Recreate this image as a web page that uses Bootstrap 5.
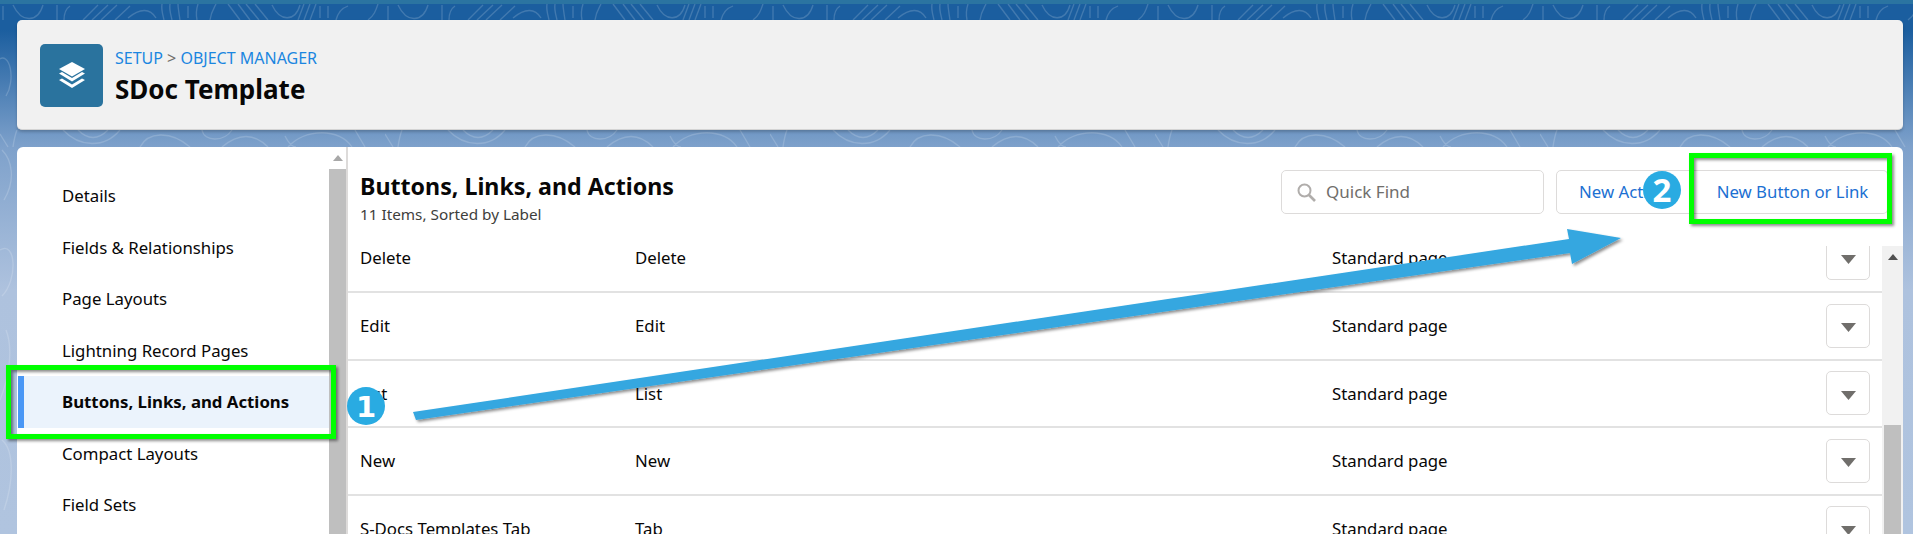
<!DOCTYPE html>
<html lang="en">
<head>
  <meta charset="UTF-8">
  <title>SDoc Template - Object Manager</title>
  <link href="https://cdn.jsdelivr.net/npm/bootstrap@5.3.0/dist/css/bootstrap.min.css" rel="stylesheet">
  <style>
    body {
      font-family: "Noto Sans", "Open Sans", sans-serif;
      font-size: 16.8px;
      color: #080707;
      overflow: hidden;
      background: linear-gradient(#1b5e9f 0, #1b5e9f 30px, #7ea1cb 147px, #aec2de 290px, #b0c4df 100%);
    }
    .topband { height: 4px; background: #2b74a1; position: relative; z-index: 1; }
    .contours { position: absolute; left: 0; top: 0; z-index: 0; }
    .shell { padding: 16px 10px 0 17px; position: relative; z-index: 1; height: 530px; }
    .head-panel { height: 110px; background: #f1f1f1; border-radius: 5px; padding: 2px 23px 0; box-shadow: 0 2px 3px rgba(0,0,0,.2); border-bottom: 1px solid #d4d4d4; }
    .obj-icon { width: 63px; height: 63px; background: #2a739e; border-radius: 5px; margin-right: 12px; }
    .crumbs { font-size: 16px; line-height: 20px; color: #706e6b; }
    .crumbs a { color: #1b86e0; text-decoration: none; }
    .obj-title { font-size: 26px; line-height: 36px; font-weight: 700; margin: 3px 0 -3px; color: #080707; }
    .main-panel { margin-top: 17px; background: #fff; min-height: 0; }
    .side-panel { width: 331px; border-right: 2px solid #dddbda; position: relative; overflow: hidden; }
    .side-nav { width: 311px; padding: 23px 0 0 1px; }
    .side-nav a { display: block; height: 51.5px; line-height: 51.5px; padding-left: 38px; color: #080707; text-decoration: none; border-left: 6px solid transparent; }
    .side-nav a.picked { background: #ebf3fc; border-left-color: #4a97f5; font-weight: 700; }
    .bar-track { width: 17px; background: #fff; }
    .bar-up { height: 22px; color: #a8a8a8; }
    .bar-thumb { background: #bfbfbf; flex: 1 1 auto; }
    .list-area { min-width: 0; }
    .list-head { height: 99px; padding: 23px 15px 0 12px; }
    .list-title { font-size: 23.2px; line-height: 32px; font-weight: 700; margin: 0; }
    .list-sub { font-size: 15.3px; line-height: 20px; color: #3e3e3c; margin-top: 2px; }
    .quick-find { width: 263px; height: 44px; border: 1px solid #dddbda; border-radius: 5px; color: #706e6b; padding-left: 15px; margin-right: 12px; font-size: 17px; }
    .quick-find svg { margin-right: 2px; }
    .action-btn { height: 44px; border: 1px solid #dddbda; background: #fff; color: #1b70d2; font-size: 16.8px; padding: 0 18px 0 22px; white-space: nowrap; }
    .action-btn:first-child { width: 139px; border-radius: 5px 0 0 5px; text-align: left; }
    .action-btn:last-child { border-radius: 0 5px 5px 0; border-left: 0; width: 194px; }
    .rows-wrap { min-height: 0; overflow: hidden; }
    .rows-scroll { overflow: hidden; }
    .rows-table { margin: -22px 0 0; table-layout: fixed; width: 100%; }
    .rows-table td { height: 67.4px; vertical-align: middle; padding: 0 0 0 12px; border-bottom: 2px solid #e2e2e2; color: #080707; }
    .rows-table tr:first-child td { height: 68.4px; }
    .row-btn { width: 44px; height: 44px; border: 1px solid #dddbda; border-radius: 5px; background: #fff; padding: 0; }
    .wide-bar { width: 21px; background: #f1f1f1; }
    .wide-bar .bar-up { height: 179px; color: #505050; }
    .wide-bar .bar-thumb { margin: 0 2px; }
    .notes { position: absolute; left: 0; top: 0; z-index: 2; pointer-events: none; }
    .note-digit { font-family: "DejaVu Sans", sans-serif; font-weight: 700; font-size: 29px; fill: #fff; text-anchor: middle; }
    .note-digit-b { font-family: "Noto Sans", sans-serif; font-size: 33px; }
  </style>
</head>
<body>
  <!-- background contour lines -->
  <svg class="contours" width="1913" height="534" aria-hidden="true">
    <defs>
      <pattern id="topo" width="385" height="534" patternUnits="userSpaceOnUse">
        <g fill="none" stroke="#fff" stroke-opacity=".17" stroke-width="1.3">
          <path d="M83 20 98 5M92 20 108 5M101 20 117 5M115 20 130 6M128 18C140 8 150 8 156 18"/>
          <path d="M162 4C161 10 163 15 164 20M170 4C169 10 171 15 172 20M178 4C178 8 179 13 180 20M188 6V18M198 4C196 10 196 15 197 20M210 20C211 12 214 8 216 4"/>
          <path d="M228 4 240 20M238 4 250 20M246 4 259 20M255 4 268 20M272 5C280 22 295 22 300 5M298 20 304 4M304 20 310 4M310 20 316 4M320 6V18M328 6V18M336 20C338 12 342 8 348 6"/>
          <path d="M368 20C374 16 376 10 378 4M3 6V20M13 5C22 24 38 22 43 5M57 5V20M64 20C64 12 67 8 70 6"/>
          <path d="M140 147C148 132 170 130 190 147M202 130C204 142 224 142 232 130M222 147C240 132 255 134 268 147M285 136C288 142 292 147 296 147M288 147C305 128 340 128 352 147"/>
          <path d="M355 130 365 147M13 147C14 140 15 135 17 130M63 130C80 148 105 148 120 130M78 130C88 140 98 140 108 130M0 134 8 147"/>
          <path d="M-2 60C10 50 16 80 6 96M2 150C12 160 16 180 4 200M0 250C16 240 18 280 2 296M6 330C14 350 8 380 0 400M2 440C14 450 14 480 4 510"/>
          <path d="M380 60C392 50 398 80 388 96M380 180C396 200 392 240 380 260M378 300C394 320 392 370 380 390"/>
        </g>
      </pattern>
    </defs>
    <rect width="1913" height="534" fill="url(#topo)"/>
  </svg>

  <div class="topband"></div>
  <div class="shell d-flex flex-column">
    <div class="head-panel d-flex align-items-center flex-shrink-0">
      <div class="obj-icon d-flex align-items-center justify-content-center">
        <svg width="28" height="27" viewBox="0 0 28 27" fill="#fff">
          <path d="M14 0 27 7 14 14.5 1 7Z"/>
          <path d="M1 11.5 4 10 14 16 24 10 27 11.5 14 19.5Z"/>
          <path d="M1 18 4 16.5 14 22.5 24 16.5 27 18 14 26Z"/>
        </svg>
      </div>
      <div>
        <div class="crumbs"><a href="#">SETUP</a> &gt; <a href="#">OBJECT MANAGER</a></div>
        <h1 class="obj-title">SDoc Template</h1>
      </div>
    </div>

    <div class="main-panel d-flex flex-grow-1 rounded-top overflow-hidden">
      <div class="side-panel d-flex flex-shrink-0">
        <nav class="side-nav flex-grow-1">
          <a href="#">Details</a>
          <a href="#">Fields &amp; Relationships</a>
          <a href="#">Page Layouts</a>
          <a href="#">Lightning Record Pages</a>
          <a href="#" class="picked">Buttons, Links, and Actions</a>
          <a href="#">Compact Layouts</a>
          <a href="#">Field Sets</a>
        </nav>
        <div class="bar-track d-flex flex-column flex-shrink-0">
          <div class="bar-up d-flex justify-content-center align-items-center">
            <svg width="10" height="6"><path d="M5 0 10 6H0Z" fill="currentColor"/></svg>
          </div>
          <div class="bar-thumb"></div>
        </div>
      </div>

      <div class="list-area d-flex flex-column flex-grow-1">
        <div class="list-head d-flex justify-content-between flex-shrink-0">
          <div>
            <h2 class="list-title">Buttons, Links, and Actions</h2>
            <div class="list-sub">11 Items, Sorted by Label</div>
          </div>
          <div class="d-flex align-items-start">
            <div class="quick-find d-flex align-items-center gap-2">
              <svg width="19" height="19" viewBox="0 0 19 19" fill="none" stroke="#b0adab" stroke-width="2"><circle cx="7.500" cy="7.500" r="6"/><path d="M12 12 18 18" stroke-width="2.600"/></svg>
              <span>Quick Find</span>
            </div>
            <div class="btn-group">
              <button type="button" class="btn action-btn">New Action</button>
              <button type="button" class="btn action-btn">New Button or Link</button>
            </div>
          </div>
        </div>
        <div class="rows-wrap d-flex flex-grow-1">
          <div class="rows-scroll flex-grow-1">
            <table class="rows-table">
              <colgroup><col style="width:275px"><col style="width:697px"><col><col style="width:68px"></colgroup>
              <tbody id="rows"></tbody>
            </table>
          </div>
          <div class="wide-bar bar-track d-flex flex-column flex-shrink-0">
            <div class="bar-up d-flex justify-content-center">
              <svg class="mt-2" width="10" height="6"><path d="M5 0 10 6H0Z" fill="currentColor"/></svg>
            </div>
            <div class="bar-thumb"></div>
          </div>
        </div>
      </div>
    </div>
  </div>

  <!-- callouts drawn on top of the screenshot -->
  <svg class="notes" width="1913" height="534" aria-hidden="true">
    <defs>
      <filter id="dropshade" x="-5%" y="-20%" width="110%" height="140%">
        <feDropShadow dx="2" dy="2" stdDeviation="1.5" flood-color="#000" flood-opacity=".45"/>
      </filter>
    </defs>
    <rect x="8.500" y="367.500" width="325" height="69" fill="none" stroke="#00ff00" stroke-width="5" filter="url(#dropshade)"/>
    <rect x="1691.500" y="155.500" width="198" height="66" fill="none" stroke="#00ff00" stroke-width="5" filter="url(#dropshade)"/>
    <path d="M413 412 1569 239 1567 229 1621 238 1572 264 1570 253 416 420Z" fill="#34a7e0" filter="url(#dropshade)"/>
    <circle cx="366" cy="406" r="19" fill="#29abe2"/>
    <text class="note-digit" x="366" y="417">1</text>
    <circle cx="1662" cy="190" r="19" fill="#29abe2"/>
    <text class="note-digit note-digit-b" x="1662" y="202">2</text>
  </svg>

  <script>
    const rows = [
      ['Delete', 'Delete'],
      ['Edit', 'Edit'],
      ['List', 'List'],
      ['New', 'New'],
      ['S-Docs Templates Tab', 'Tab']
    ];

    document.getElementById('rows').innerHTML = rows.map(r => `
      <tr>
        <td>${r[0]}</td>
        <td>${r[1]}</td>
        <td>Standard page</td>
        <td><button type="button" class="row-btn" aria-label="Show actions"><svg width="15" height="9"><path d="M0 0H15L7.500 9Z" fill="#706e6b"/></svg></button></td>
      </tr>`).join('');
  </script>
  <script src="https://cdn.jsdelivr.net/npm/bootstrap@5.3.0/dist/js/bootstrap.bundle.min.js"></script>
</body>
</html>
